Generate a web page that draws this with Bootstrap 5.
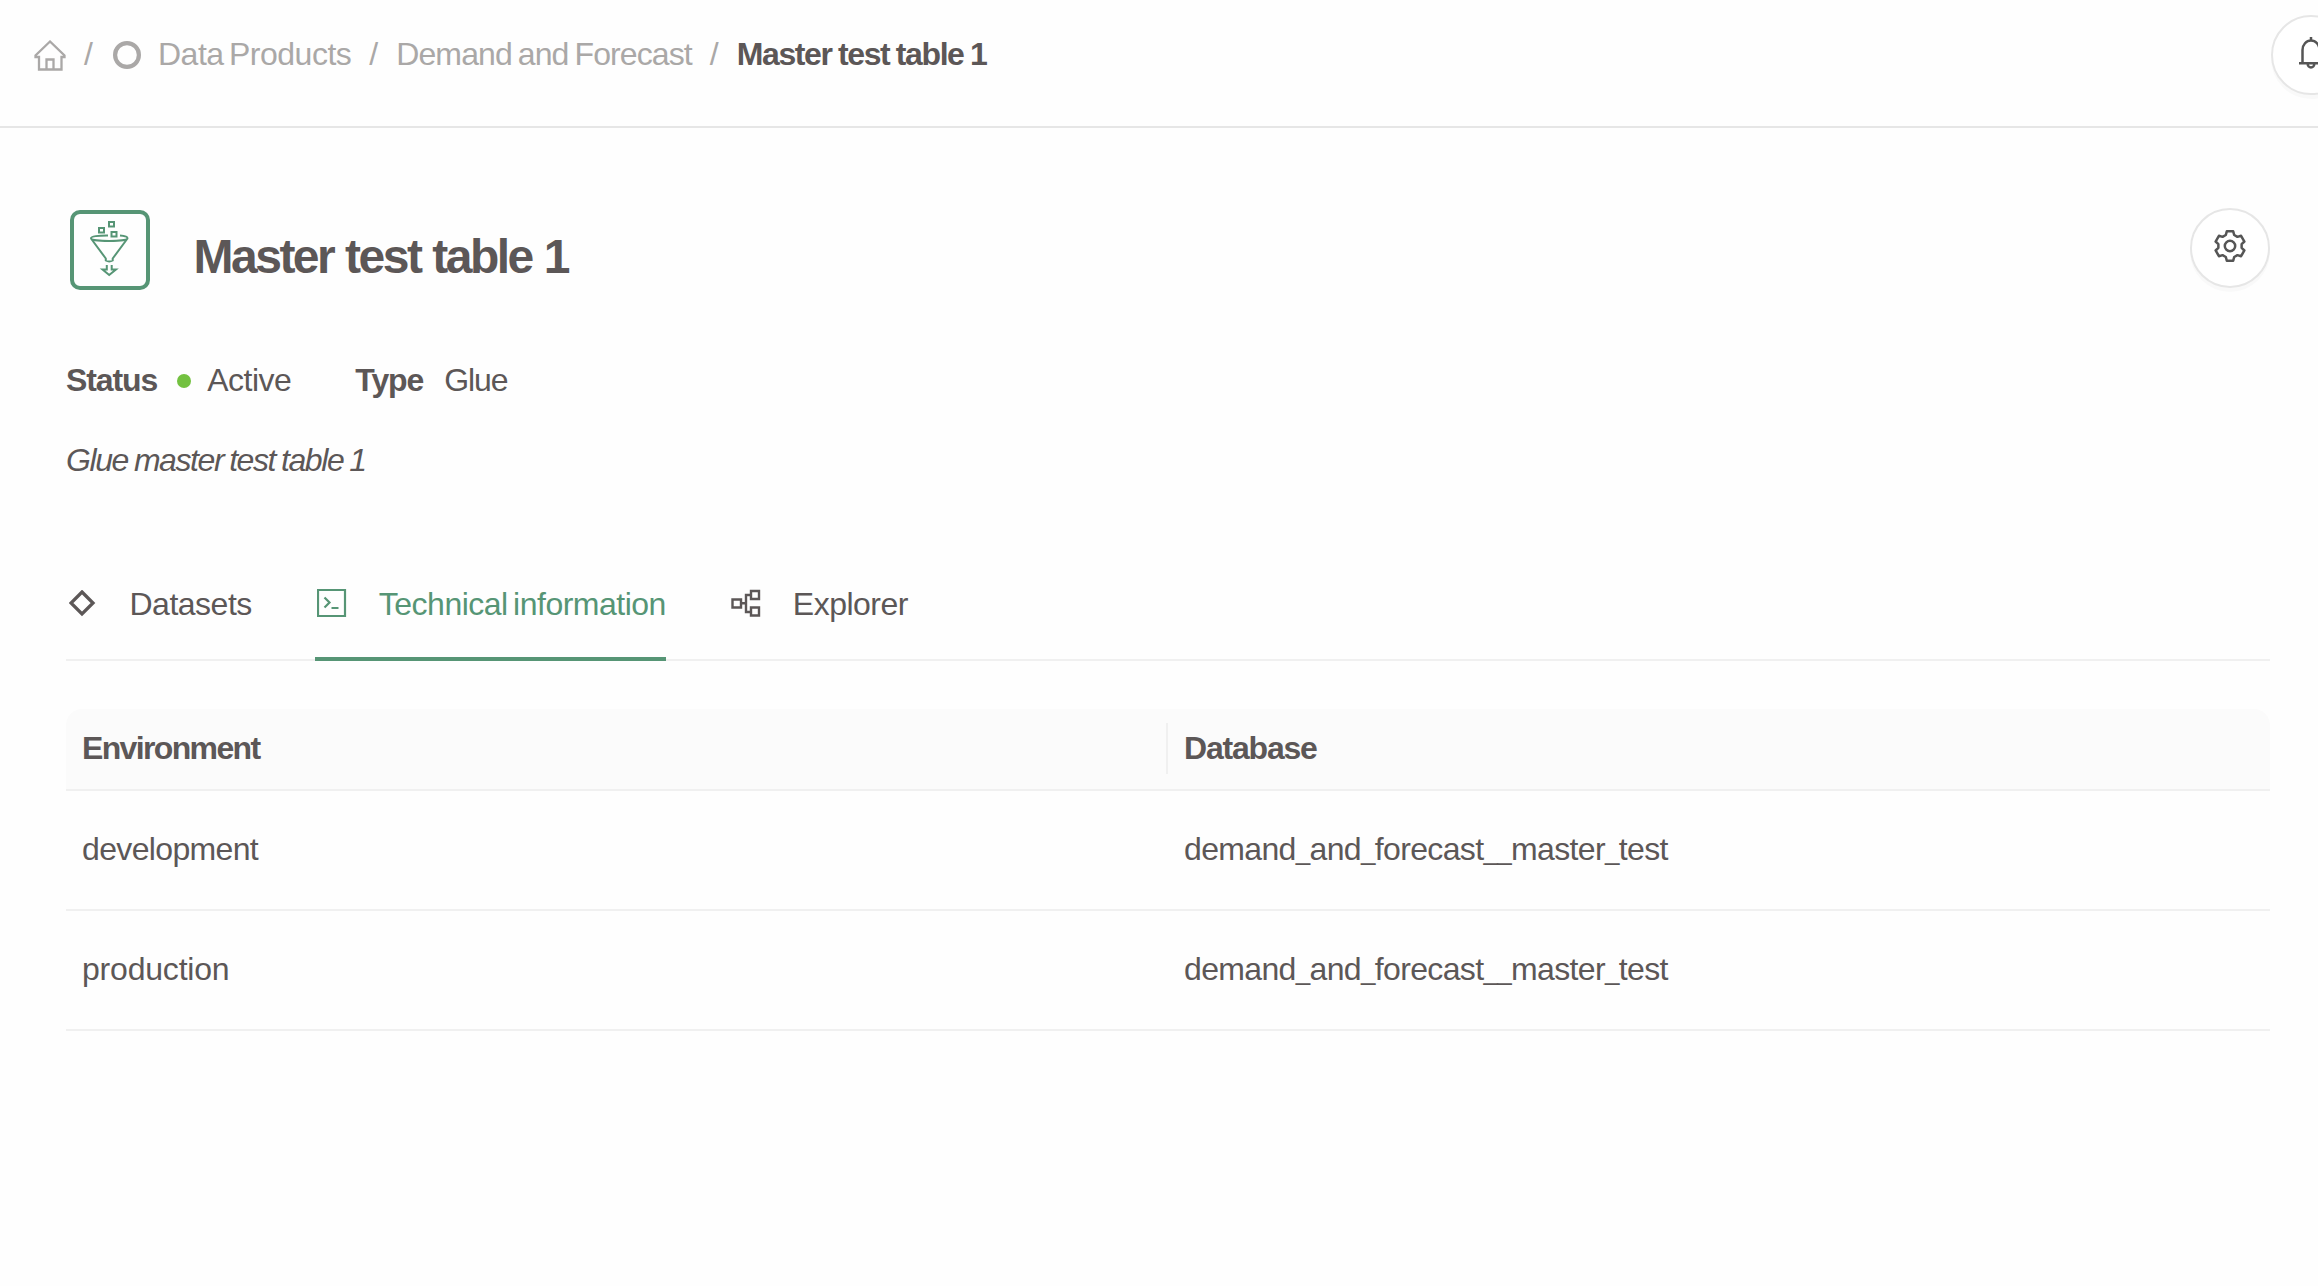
<!DOCTYPE html>
<html lang="en">
<head>
<meta charset="utf-8">
<meta name="viewport" content="width=device-width, initial-scale=1">
<title>Master test table 1</title>
<link href="https://cdn.jsdelivr.net/npm/bootstrap@5.3.0/dist/css/bootstrap.min.css" rel="stylesheet">
<style>
:root{--ink:#5c5757;--muted:#aaa8a7;--accent:#569575;--line:#f0f0f0}
body{font-family:"Liberation Sans",Arial,sans-serif;font-size:32px;line-height:50px;letter-spacing:-.5px;word-spacing:-3px;color:var(--ink);background:#fefefe;overflow:hidden}
svg{display:block;flex:none;fill:none;stroke:currentColor}
a{color:inherit;text-decoration:none}
.topbar{height:128px;border-bottom:2px solid #e6e6e6;padding:15px 0 0 34px}
.crumbs{margin-top:14px;color:var(--muted);white-space:nowrap}
.home-icon{margin-top:11px}
.ring-icon{margin:12px 17px 0 2px}
.slash{margin:0 17px 0 18px;width:10px}
.crumbs .parent{letter-spacing:-.9px;word-spacing:-2px}
.crumbs .current{color:var(--ink);letter-spacing:-1.4px;word-spacing:-1px}
.round-btn{width:80px;height:80px;border:2px solid #e6e6e6;border-radius:50%;background:#fff;box-shadow:0 4px 0 rgba(0,0,0,.02);color:#555;flex:none;padding:20px 0 0}
.bell-btn{margin-right:-33px}
.page{padding:80px 48px 0 66px}
.logo{color:var(--accent);margin:2px 0 0 4px}
h1{font-size:48px;line-height:64px;letter-spacing:-2.500px;word-spacing:1px;font-weight:700;margin:17px 0 0 43.500px}
.title-row{height:147px}
.status-row{height:80px}
.status-row b{letter-spacing:-1.1px}
.dot{width:14px;height:14px;border-radius:50%;background:#73c140;margin:19px 16px 0 20px}
.type-label{margin:0 21px 0 64px}
.type-value{letter-spacing:-1.1px}
.summary{height:126px;letter-spacing:-1.42px;word-spacing:-1.500px;font-style:italic}
.tabs{border-bottom:2px solid var(--line);height:100px;flex-wrap:nowrap;white-space:nowrap}
.tabs .nav-link{padding:18px 0 0;margin:0 0 -2px;height:100px;border:0;color:var(--ink);border-radius:0;display:flex}
.tabs .nav-link.active{color:var(--accent);border-bottom:4px solid var(--accent);width:351px;margin-left:63px;margin-right:65px}
.datasets-icon{margin:11px 20.500px 0 3px}
.technical-icon{margin:9px 20px 0 2px}
.explorer-icon{margin:10px 20.500px 0 .5px}
.info{border-collapse:separate;border-spacing:0;table-layout:fixed;margin-top:48px;width:100%}
.info th{background:#fbfbfb;padding:14px 16px 16px;border-bottom:2px solid var(--line);position:relative;letter-spacing:-1.65px}
.info th:first-child{border-radius:16px 0 0 0}
.info th:last-child{border-radius:0 16px 0 0;letter-spacing:-1.2px}
.info th:first-child::after{content:"";position:absolute;right:0;top:14px;width:2px;height:51px;background:var(--line)}
.info td{padding:33px 16px 35px;border-bottom:2px solid var(--line);letter-spacing:-.65px;line-height:50px}
.info td.prod{letter-spacing:-.2px}
.us{font-size:26px;line-height:1}
</style>
</head>
<body>
<header class="topbar d-flex justify-content-between align-items-start">
<nav class="crumbs d-flex" aria-label="breadcrumb">
<a href="#" aria-label="Home"><svg class="home-icon" width="32" height="31" viewBox="0 0 32 31" stroke-width="2.300"><path d="M16 1.500 1.500 15.500V17H5V29.500H27.500V17H30.500V15.500ZM12.500 29V19.500H19.500V29"/></svg></a>
<span class="slash">/</span>
<svg class="ring-icon" width="28" height="28" viewBox="0 0 28 28" stroke-width="4.200"><circle cx="14" cy="14" r="11.900"/></svg>
<a href="#">Data Products</a>
<span class="slash">/</span>
<a class="parent" href="#">Demand and Forecast</a>
<span class="slash">/</span>
<span class="current fw-bold">Master test table 1</span>
</nav>
<button class="round-btn bell-btn d-flex justify-content-center align-items-start" aria-label="Notifications"><svg width="28" height="32" viewBox="0 0 28 32" stroke-width="2.500"><path d="M14 0V4M5.500 26V13A8.500 9.500 0 0 1 22.500 13V26M2 26.300H26M10.700 27A3.300 3.500 0 0 0 17.300 27"/></svg></button>
</header>
<main class="page">
<div class="title-row d-flex align-items-start">
<svg class="logo" width="80" height="80" viewBox="10 10 80 80"><rect x="12" y="12" width="76" height="76" rx="8" stroke-width="4"/><g stroke-width="2"><path d="M49 22h5v4.500h-5zM39 28h5v4.500h-5zM51.500 32h5v4.500h-5z"/><path d="M48 35.400C38 35.300 31 36.500 31 38.200 31 42 67.500 42 67.500 38.200 67.500 37 64.500 36 60 35.600M31 38.500 45.800 58.500V60.500Q49.200 62.500 52.700 60.500V58.500L67.500 38.500M46.800 65V69.500H42.500L49.200 75 56 69.500H51.700V65"/></g></svg>
<h1>Master test table 1</h1>
<button class="round-btn ms-auto d-flex justify-content-center align-items-start" aria-label="Settings"><svg width="32" height="32" viewBox="-16 -16 32 32" stroke-width="2.500" stroke-linejoin="round"><path d="M-3.200-14.700H3.200L4.200-11 7.430-9.140 11.080-10.210 14.380-4.490 11.630-1.860V1.860L14.380 4.490 11.080 10.210 7.430 9.140 4.200 11 3.200 14.700H-3.200L-4.200 11-7.430 9.140-11.080 10.210-14.380 4.490-11.630 1.860V-1.860L-14.380-4.490-11.080-10.210-7.430-9.140-4.200-11Z"/><circle r="5.200"/></svg></button>
</div>
<div class="status-row d-flex"><b>Status</b><span class="dot"></span><span>Active</span><b class="type-label">Type</b><span class="type-value">Glue</span></div>
<div class="summary">Glue master test table 1</div>
<nav class="nav tabs">
<a class="nav-link" href="#"><svg class="datasets-icon" width="40" height="27" viewBox="0 0 40 27" stroke-width="3.300"><path d="M13 2 24 13 13 24 2 13Z"/></svg>Datasets</a>
<a class="nav-link active" href="#"><svg class="technical-icon" width="42" height="30" viewBox="0 0 42 30" stroke-width="2.200"><path d="M1 2H28V28H1ZM7.500 9.500 12.500 14.500 7.500 19.500M14.500 20H21.500"/></svg>Technical information</a>
<a class="nav-link" href="#"><svg class="explorer-icon" width="41" height="29" viewBox="0 0 41 29" stroke-width="2.400"><path d="M1.500 10.500H10V18.500H1.500ZM20 2H28V10H20ZM20 18.500H28V26.500H20ZM10 14.300H15M20 6H15V23H20"/></svg>Explorer</a>
</nav>
<table class="info">
<thead><tr><th>Environment</th><th>Database</th></tr></thead>
<tbody>
<tr><td>development</td><td>demand<span class="us">_</span>and<span class="us">_</span>forecast<span class="us">__</span>master<span class="us">_</span>test</td></tr>
<tr><td class="prod">production</td><td>demand<span class="us">_</span>and<span class="us">_</span>forecast<span class="us">__</span>master<span class="us">_</span>test</td></tr>
</tbody>
</table>
</main>
<script src="https://cdn.jsdelivr.net/npm/bootstrap@5.3.0/dist/js/bootstrap.bundle.min.js"></script>
</body>
</html>
